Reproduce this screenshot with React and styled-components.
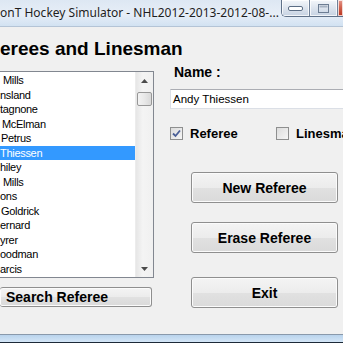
import React from "react";
import styled, { createGlobalStyle } from "styled-components";

const Global = createGlobalStyle`
  html, body { margin: 0; padding: 0; background: #f0f0f0; overflow: hidden; }
`;

const Window = styled.div`
  width: 343px;
  height: 343px;
  overflow: hidden;
  display: flex;
  flex-direction: column;
  background: #f0f0f0;
  font-family: "Liberation Sans", Arial, sans-serif;
  color: #000;
`;

const TitleBar = styled.div`
  height: 26px;
  flex-shrink: 0;
  display: flex;
  align-items: flex-start;
  background: linear-gradient(#dde7f3, #e7eef7 55%, #d2e2f2);
  border-bottom: 1px solid #b4c4d6;
`;

const TitleText = styled.div`
  flex: 1;
  min-width: 0;
  overflow: hidden;
  white-space: nowrap;
  font-family: "Noto Sans", "Open Sans", sans-serif;
  font-size: 12px;
  line-height: 26px;
  color: #1e1e1e;
`;

const Controls = styled.div`
  display: flex;
  flex: 0 0 62px;
  height: 17px;
  box-sizing: border-box;
  border-left: 1px solid #5f7189;
  border-bottom: 1px solid #5f7189;
  border-radius: 0 0 0 5px;
  overflow: hidden;
`;

const CtrlButton = styled.div`
  flex: ${(p) => (p.$close ? "1" : `0 0 ${p.$w}px`)};
  height: 16px;
  display: flex;
  align-items: center;
  justify-content: center;
  box-sizing: border-box;
  border-left: ${(p) => (p.$first ? "none" : "1px solid #6f8199")};
  background: ${(p) =>
    p.$close
      ? "linear-gradient(#e4998d, #d1624e 45%, #b9341f)"
      : "linear-gradient(#f4f7fb, #dfe6ef 45%, #c6d2e2)"};
  box-shadow: inset 0 0 0 1px rgba(255, 255, 255, 0.75);
`;

const Client = styled.div`
  flex: 1;
  display: flex;
  flex-direction: column;
`;

const Heading = styled.h1`
  margin: 11px 0 0 0;
  font-size: 19px;
  line-height: 22px;
  font-weight: bold;
  white-space: nowrap;
`;

const Body = styled.div`
  display: flex;
  align-items: flex-start;
  margin-top: 4px;
`;

const LeftCol = styled.div`
  width: 154px;
  flex-shrink: 0;
  display: flex;
  flex-direction: column;
  padding-top: 7px;
`;

const ListBox = styled.div`
  height: 207px;
  box-sizing: border-box;
  border: 1px solid #828790;
  border-left: none;
  background: #fff;
  display: flex;
`;

const Items = styled.div`
  flex: 1;
  padding-top: 1px;
  overflow: hidden;
`;

const Item = styled.div`
  height: 14.5px;
  line-height: 14.5px;
  font-size: 11px;
  letter-spacing: -0.3px;
  white-space: nowrap;
  padding-left: ${(p) => p.$indent || 0}px;
  background: ${(p) => (p.$selected ? "#3399ff" : "transparent")};
  color: ${(p) => (p.$selected ? "#fff" : "#000")};
`;

const ScrollBar = styled.div`
  width: 17px;
  flex-shrink: 0;
  display: flex;
  flex-direction: column;
  background: linear-gradient(90deg, #e6e6e6, #f4f4f4 40%, #f0f0f0);
  border-left: 1px solid #ececec;
`;

const Arrow = styled.div`
  height: 17px;
  display: flex;
  align-items: center;
  justify-content: center;
`;

const Thumb = styled.div`
  margin: 3px 1px 0 1px;
  height: 14px;
  box-sizing: border-box;
  border: 1px solid #979797;
  border-radius: 2px;
  background: linear-gradient(90deg, #f3f3f3, #e8e8e8 50%, #d9d9d9);
`;

const Spacer = styled.div`
  flex: 1;
`;

const WinButton = styled.button`
  box-sizing: border-box;
  width: ${(p) => p.$w || 147}px;
  height: ${(p) => p.$h || 31}px;
  margin-top: ${(p) => p.$mt || 0}px;
  margin-left: ${(p) => p.$ml || 0}px;
  padding: 0;
  padding-left: ${(p) => (p.$left ? 6 : 0)}px;
  text-align: ${(p) => (p.$left ? "left" : "center")};
  border: 1px solid #8f8f8f;
  border-left: ${(p) => (p.$left ? "none" : "1px solid #8f8f8f")};
  border-radius: 3px;
  background: linear-gradient(#f4f4f4, #ececec 50%, #e1e1e1 51%, #dadada);
  box-shadow: inset 0 0 0 1px #fbfbfb;
  font-family: "Liberation Sans", Arial, sans-serif;
  font-size: 14px;
  font-weight: bold;
  color: #000;
`;

const RightCol = styled.div`
  margin-left: 16px;
  display: flex;
  flex-direction: column;
  flex-shrink: 0;
`;

const Label = styled.div`
  font-size: 14px;
  font-weight: bold;
  line-height: 16px;
  padding-left: 4px;
`;

const TextBox = styled.div`
  margin-top: 9px;
  width: 200px;
  height: 20px;
  box-sizing: border-box;
  border: 1px solid #dbdfe6;
  border-top-color: #abadb3;
  background: #fff;
  padding-left: 2px;
  font-size: 11.5px;
  line-height: 18px;
  white-space: nowrap;
`;

const CheckRow = styled.div`
  margin-top: 18px;
  height: 13px;
  display: flex;
  align-items: center;
`;

const CheckItem = styled.div`
  display: flex;
  align-items: center;
  width: ${(p) => p.$w}px;
  flex-shrink: 0;
  white-space: nowrap;
`;

const Box = styled.div`
  width: 13px;
  height: 13px;
  box-sizing: border-box;
  border: 1px solid #8e8f8f;
  background: linear-gradient(135deg, #dcdcdc, #f6f6f6);
  display: flex;
  align-items: center;
  justify-content: center;
  margin-right: 7px;
  flex-shrink: 0;
`;

const CheckText = styled.span`
  font-size: 13px;
  font-weight: bold;
  line-height: 13px;
`;

const BottomFrame = styled.div`
  height: 9px;
  flex-shrink: 0;
  box-sizing: border-box;
  border-top: 1px solid #8999ab;
  border-bottom: 1px solid #1d2a38;
  background: linear-gradient(#b9d3ec, #d4e6f7);
`;

const names = [
  { t: " Mills", i: 3 },
  { t: "nsland" },
  { t: "tagnone" },
  { t: "McElman", i: 2 },
  { t: "Petrus", i: 1 },
  { t: "Thiessen", sel: true },
  { t: "hiley" },
  { t: " Mills", i: 3 },
  { t: "ons" },
  { t: "Goldrick", i: 1 },
  { t: "ernard" },
  { t: "yrer" },
  { t: "oodman" },
  { t: "arcis" },
];

const Tri = ({ down }) => (
  <svg width="7" height="4" viewBox="0 0 7 4">
    <path d={down ? "M0 0 H7 L3.5 4 Z" : "M0 4 H7 L3.5 0 Z"} fill="#4b4b4b" />
  </svg>
);

const Check = () => (
  <svg width="9" height="9" viewBox="0 0 9 9">
    <path d="M1 4.5 L3.5 7 L8 1.5" fill="none" stroke="#4a5f97" strokeWidth="1.8" />
  </svg>
);

export default function App() {
  return (
    <>
      <Global />
      <Window>
        <TitleBar>
          <TitleText>onT Hockey Simulator - NHL2012-2013-2012-08-...</TitleText>
          <Controls>
            <CtrlButton $w={27} $first>
              <svg width="15" height="5" viewBox="0 0 15 5">
                <rect x="0.5" y="0.5" width="14" height="4" rx="1.5" fill="#fff" stroke="#5b6d84" />
              </svg>
            </CtrlButton>
            <CtrlButton $w={28}>
              <svg width="11" height="9" viewBox="0 0 11 9">
                <rect x="0.5" y="0.5" width="10" height="8" fill="none" stroke="#6c7d93" />
                <rect x="1.5" y="1.5" width="8" height="2" fill="#6c7d93" opacity="0.5" />
              </svg>
            </CtrlButton>
            <CtrlButton $close />
          </Controls>
        </TitleBar>
        <Client>
          <Heading>erees and Linesman</Heading>
          <Body>
            <LeftCol>
              <ListBox>
                <Items>
                  {names.map((n, k) => (
                    <Item key={k} $indent={n.i} $selected={n.sel}>
                      {n.t}
                    </Item>
                  ))}
                </Items>
                <ScrollBar>
                  <Arrow>
                    <Tri />
                  </Arrow>
                  <Thumb />
                  <Spacer />
                  <Arrow>
                    <Tri down />
                  </Arrow>
                </ScrollBar>
              </ListBox>
              <WinButton $left $w={152} $h={20} $mt={9}>
                Search Referee
              </WinButton>
            </LeftCol>
            <RightCol>
              <Label>Name :</Label>
              <TextBox>Andy Thiessen</TextBox>
              <CheckRow>
                <CheckItem $w={106}>
                  <Box>
                    <Check />
                  </Box>
                  <CheckText>Referee</CheckText>
                </CheckItem>
                <CheckItem $w={100}>
                  <Box />
                  <CheckText>Linesman</CheckText>
                </CheckItem>
              </CheckRow>
              <WinButton $ml={21} $mt={32}>New Referee</WinButton>
              <WinButton $ml={21} $mt={19}>Erase Referee</WinButton>
              <WinButton $ml={21} $mt={24}>Exit</WinButton>
            </RightCol>
          </Body>
        </Client>
        <BottomFrame />
      </Window>
    </>
  );
}
